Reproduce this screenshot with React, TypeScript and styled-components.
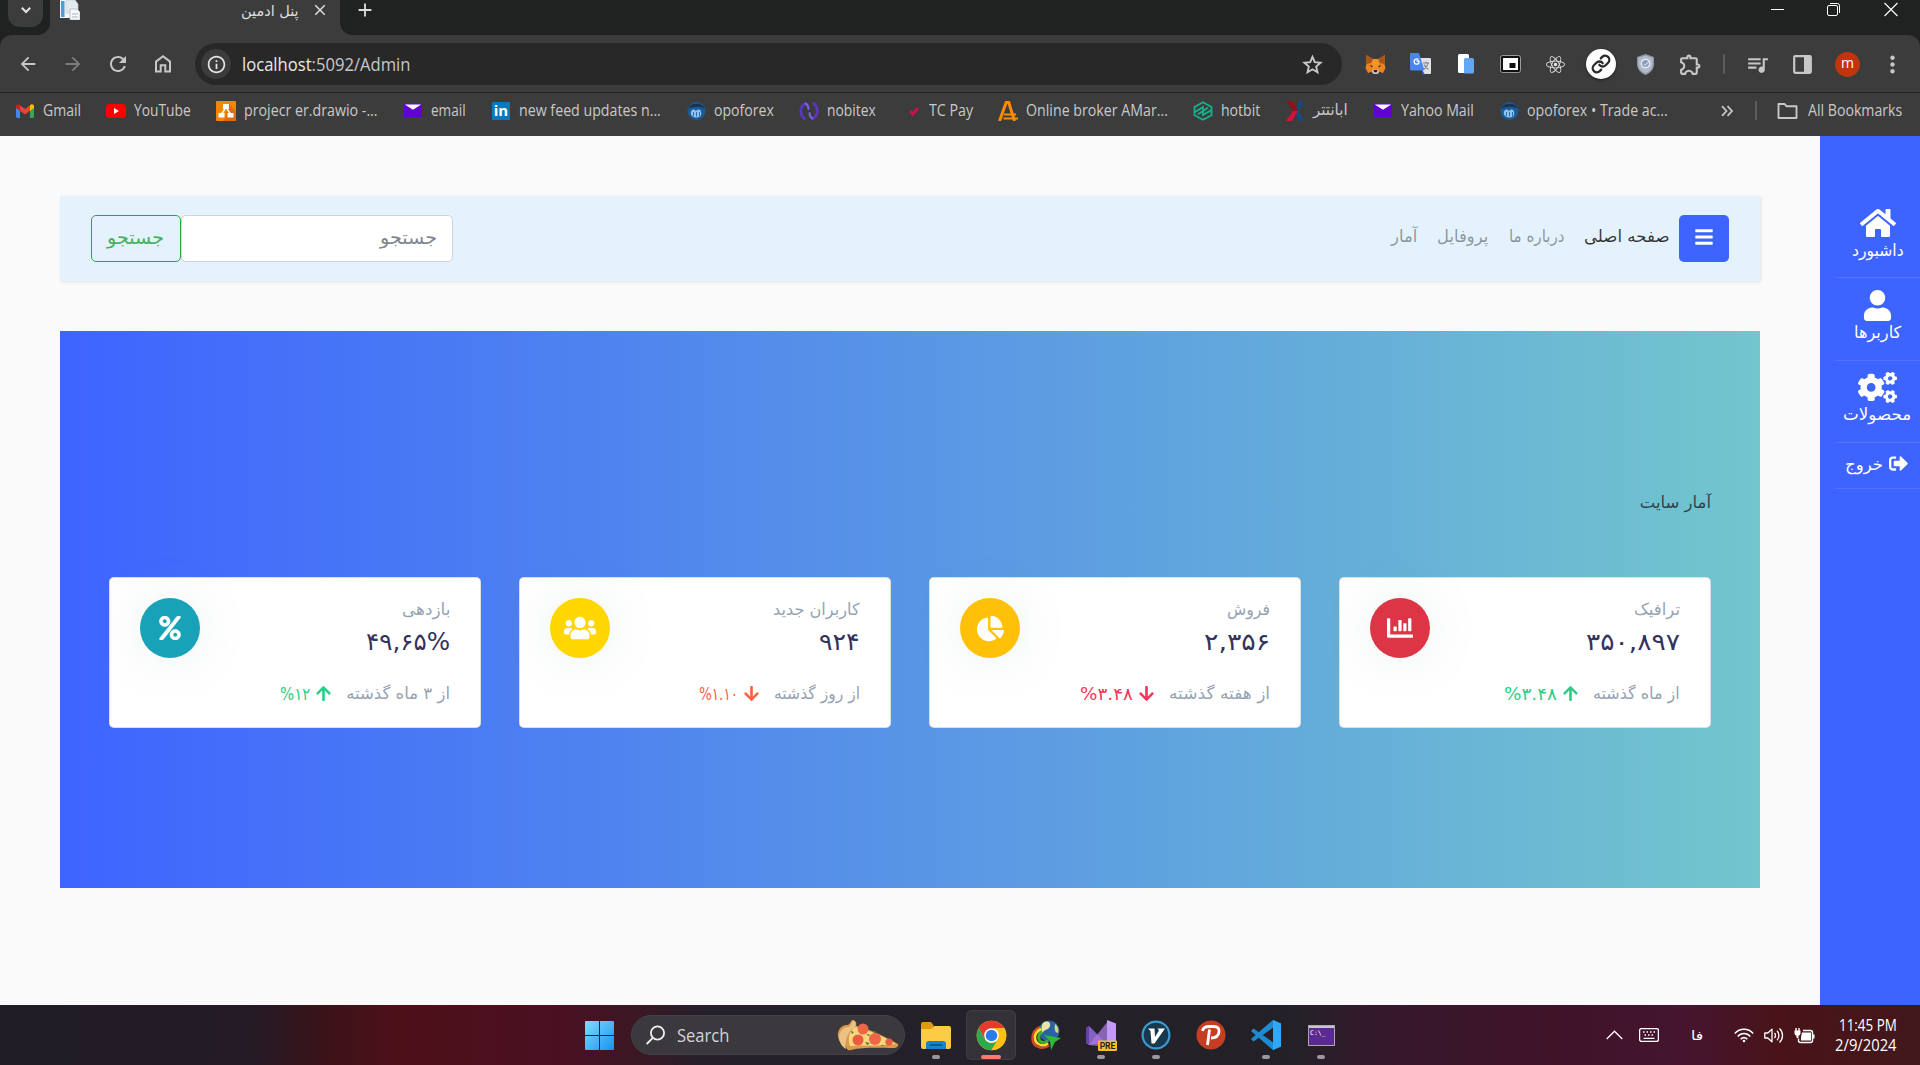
import React, { useLayoutEffect, useRef, useState } from "react";
import styled, { createGlobalStyle } from "styled-components";
import {
  FaArrowDown,
  FaArrowUp,
  FaBars,
  FaChartBar,
  FaChartPie,
  FaCogs,
  FaHome,
  FaPercent,
  FaReact,
  FaSignOutAlt,
  FaUser,
  FaUsers,
} from "react-icons/fa";
import {
  MdAdd,
  MdArrowBack,
  MdArrowForward,
  MdClose,
  MdInfoOutline,
  MdMoreVert,
  MdOutlineExtension,
  MdQueueMusic,
  MdRefresh,
} from "react-icons/md";
import { Link as LinkIcon } from "lucide-react";

const latin = `"Open Sans", "Noto Sans", "DejaVu Sans", sans-serif`;
const persian = `"DejaVu Sans", "Noto Sans", sans-serif`;

const GlobalStyle = createGlobalStyle`
  *, *::before, *::after { box-sizing: border-box; }
  body { margin: 0; background: #fafafa; font-family: ${latin}; overflow: hidden; }
  svg { display: block; flex: none; }
`;

/* ---------- text that keeps a given advance width ---------- */

const FitOuter = styled.span<{ $w: number; $rtl?: boolean }>`
  display: block;
  flex: none;
  width: ${(p) => p.$w}px;
  direction: ${(p) => (p.$rtl ? "rtl" : "ltr")};
  white-space: nowrap;
`;
const FitInner = styled.span<{ $size: number; $rtl?: boolean; $fa?: boolean; $dy?: number }>`
  display: inline-block;
  transform-origin: ${(p) => (p.$rtl ? "right" : "left")} center;
  font-family: ${(p) => (p.$fa ? persian : latin)};
  font-size: ${(p) => p.$size}px;
  line-height: 24px;
  margin-top: ${(p) => p.$dy ?? 0}px;
  vertical-align: top;
`;

interface FitProps {
  w: number;
  size: number;
  rtl?: boolean;
  fa?: boolean;
  dy?: number;
  children: React.ReactNode;
}
function Fit({ w, size, rtl, fa, dy, children }: FitProps) {
  const ref = useRef<HTMLSpanElement>(null);
  const [scale, setScale] = useState(1);
  useLayoutEffect(() => {
    if (ref.current && ref.current.offsetWidth) setScale(w / ref.current.offsetWidth);
  }, [w, size]);
  return (
    <FitOuter $w={w} $rtl={rtl}>
      <FitInner ref={ref} $size={size} $rtl={rtl} $fa={fa} $dy={dy} style={{ transform: `scaleX(${scale})` }}>
        {children}
      </FitInner>
    </FitOuter>
  );
}

/* ---------- browser frame ---------- */

const Screen = styled.div`
  width: 1920px;
  height: 1065px;
  display: flex;
  flex-direction: column;
  overflow: hidden;
`;
const Frame = styled.header`
  background: #202221;
  flex: none;
`;
const TabStrip = styled.div`
  height: 35px;
  display: flex;
  align-items: flex-start;
  padding-left: 8px;
  color: #dcdcdc;
`;
const TabSearch = styled.div`
  width: 35px;
  height: 27px;
  border-radius: 0 0 12px 12px;
  background: #3c3c3c;
  display: flex;
  justify-content: center;
  padding-top: 3px;
`;
const Flare = styled.div<{ $side: "left" | "right" }>`
  width: 12px;
  height: 12px;
  align-self: flex-end;
  margin-left: ${(p) => (p.$side === "left" ? "-5px" : "0")};
  background: radial-gradient(
    circle at ${(p) => (p.$side === "left" ? "0 0" : "100% 0")},
    transparent 11.5px,
    #3c3c3c 12.2px
  );
`;
const Tab = styled.div`
  width: 290px;
  height: 35px;
  background: #3c3c3c;
  display: flex;
  align-items: flex-start;
  padding-left: 10px;
`;
const TabTitle = styled.div`
  margin-left: 161px;
`;
const TabClose = styled.div`
  margin: 1px 0 0 12px;
`;
const NewTab = styled.div`
  margin: -1px 0 0 2px;
`;
const WindowButtons = styled.div`
  margin-left: auto;
  display: flex;
  gap: 42px;
  padding: 2px 21px 0 0;
`;
const Toolbar = styled.div`
  height: 57px;
  background: #3c3c3c;
  border-radius: 12px 12px 0 0;
  display: flex;
  align-items: center;
  color: #c7c7c7;
  padding-left: 5px;
`;
const ToolSlot = styled.div<{ $dim?: boolean }>`
  width: 45px;
  height: 45px;
  flex: none;
  display: flex;
  align-items: center;
  justify-content: center;
  padding-top: 1px;
  color: ${(p) => (p.$dim ? "#7d7d7d" : "#c7c7c7")};
`;
const Address = styled.div`
  width: 1147px;
  height: 42px;
  margin: 1px 0 0 10px;
  border-radius: 21px;
  background: #282828;
  display: flex;
  align-items: center;
  padding: 0 19px 0 6px;
  color: #c7c7c7;
`;
const SiteInfo = styled.div`
  width: 30px;
  height: 30px;
  border-radius: 50%;
  background: #3c3c3c;
  color: #e3e3e3;
  display: flex;
  align-items: center;
  justify-content: center;
  margin-right: 11px;
`;
const Host = styled.span`
  color: #e8e8e8;
`;
const StarHolder = styled.div`
  margin-left: auto;
`;
const Extensions = styled.div`
  display: flex;
  align-items: center;
  margin-left: 11px;
`;
const LinkBadge = styled.div`
  width: 30px;
  height: 30px;
  border-radius: 50%;
  background: #fff;
  color: #2b2b2b;
  display: flex;
  align-items: center;
  justify-content: center;
  box-shadow: 0 1px 3px rgba(0, 0, 0, 0.5);
`;
const ToolDivider = styled.div`
  width: 2px;
  height: 20px;
  background: #5c5c5c;
  margin: 0 10px 0 10px;
`;
const Avatar = styled.div`
  width: 25px;
  height: 25px;
  border-radius: 50%;
  background: #bf360c;
  color: #fff;
  font-size: 14px;
  line-height: 22px;
  text-align: center;
`;
const Bookmarks = styled.nav`
  height: 44px;
  border-top: 1px solid #202221;
  background: #3c3c3c;
  display: flex;
  align-items: center;
  padding: 0 0 8px 15px;
  color: #c9c9c9;
`;
const Bookmark = styled.div`
  display: flex;
  align-items: center;
  gap: 8px;
  margin-right: 25px;
`;
const BookmarkIcon = styled.div`
  width: 20px;
  height: 20px;
  display: flex;
  align-items: center;
  justify-content: center;
`;
const MoreMarks = styled.div`
  margin-left: 28px;
`;
const MarksDivider = styled.div`
  width: 2px;
  height: 19px;
  background: #5c5c5c;
  margin: 0 20px 0 22px;
`;
const FolderLabel = styled.div`
  margin-left: 10px;
`;

/* ---------- small drawings ---------- */

const PageIcon = () => (
  <svg width="20" height="20" viewBox="0 0 20 20">
    <path d="M0 0h13v18H0z" fill="#f4f6f8" />
    <path d="M1 1h3.500v16H1z" fill="#4a9fd0" />
    <path d="M6 0h9l3 4v9H6z" fill="#e3e9ef" stroke="#c6ced6" strokeWidth=".7" />
    <path d="M10 9h7l3 3v8H10z" fill="#f7f7f7" stroke="#a9b2ba" strokeWidth=".7" />
    <path d="M12 14h6M12 17h6" stroke="#a7b6c4" strokeWidth="1" />
  </svg>
);
const ChevronDown = () => (
  <svg width="14" height="14" viewBox="0 0 14 14" fill="none" stroke="#e3e3e3" strokeWidth="2">
    <path d="M2.800 4.800 7 9l4.200-4.200" />
  </svg>
);
const HomeIcon = () => (
  <svg width="18" height="20" viewBox="0 0 18 20" fill="none" stroke="currentColor" strokeWidth="2">
    <path d="M2 17.500V7.600L9 2.200l7 5.400v9.900h-4.700v-6.200H6.700v6.200z" />
  </svg>
);
const Star = () => (
  <svg width="21" height="21" viewBox="0 0 21 21" fill="none" stroke="currentColor" strokeWidth="1.900">
    <path d="m10.500 2.800 2.300 5.400 5.800.5-4.400 3.900 1.300 5.700-5-3-5 3 1.300-5.700-4.400-3.900 5.800-.5z" />
  </svg>
);
const Fox = () => (
  <svg width="21" height="21" viewBox="0 0 21 21">
    <path d="M1 1l7 4h5l7-4-.5 9 1 4-2.500 5-4.500-1.500h-6L3 19 .5 14l1-4z" fill="#ee8420" />
    <path d="M1 1l7 4-2 4-4.500 1zM20 1l-7 4 2 4 4.500 1z" fill="#a4561f" />
    <path d="M8 5h5l1.500 9h-8z" fill="#f79429" />
    <path d="M7.500 15.500h6l.5 3-1.500 1.500h-4L7 18.500z" fill="#d6c0b3" />
    <path d="M8.500 16h4l-.8 2.200H9.300z" fill="#222" />
    <path d="M4.500 11l3.500 1-1 1.500zM16.500 11l-3.500 1 1 1.500z" fill="#233447" />
  </svg>
);
const Translate = () => (
  <svg width="22" height="22" viewBox="0 0 22 22">
    <path d="M9 5h11a1 1 0 0 1 1 1v14a1 1 0 0 1-1 1h-7z" fill="#dfe3e6" />
    <path d="M12 17l3 4.500h-3z" fill="#2a56c6" />
    <path d="M1 0h8l5.500 17.500H1a1 1 0 0 1-1-1V1a1 1 0 0 1 1-1z" fill="#4a86ee" />
    <path d="M9.300 8H6.500M8.400 6.600a2.600 2.600 0 1 0 .9 2" fill="none" stroke="#fff" strokeWidth="1.300" />
    <path d="M13 10h6M16 8.500V10M18 10c-.5 3-2.500 5-4 6M14 11.500c1 2.500 3 4 4.500 4.800" fill="none" stroke="#77828c" strokeWidth="1.100" />
  </svg>
);
const Devices = () => (
  <svg width="18" height="20" viewBox="0 0 18 20">
    <rect x="1" y="0" width="11" height="19" rx="1.500" fill="#fff" />
    <rect x="7" y="4" width="10" height="15.500" rx="1.500" fill="#62a7f7" />
  </svg>
);
const Pip = () => (
  <svg width="21" height="18" viewBox="0 0 21 18">
    <rect x=".5" y=".5" width="20" height="17" rx="2" fill="#111" stroke="#999" />
    <path d="M3 3h15v12H3z" fill="#fff" />
    <path d="M9.500 8h6v5h-6z" fill="#111" />
  </svg>
);
const Shield = () => (
  <svg width="17" height="21" viewBox="0 0 17 21">
    <path d="M8.500 0 17 3v7c0 5-3.500 9-8.500 11C3.500 19 0 15 0 10V3z" fill="#8d97a8" />
    <path d="M8.500 1.500 15.600 4v6c0 4.200-3 7.500-7.100 9.400C4.400 17.500 1.400 14.200 1.400 10V4z" fill="#b4bccb" />
    <circle cx="8.500" cy="9.500" r="4.200" fill="#8f9fc0" stroke="#e8ecf5" strokeWidth="1.300" />
    <path d="M7 11c2.500 0 3-1.500 5-4" stroke="#e8ecf5" fill="none" />
  </svg>
);
const SidePanel = () => (
  <svg width="19" height="19" viewBox="0 0 19 19">
    <rect x="1.200" y="1.200" width="16.600" height="16.600" rx="1" fill="none" stroke="#c7c7c7" strokeWidth="2.200" />
    <path d="M11 1h7v17h-7z" fill="#c7c7c7" />
  </svg>
);
const Gmail = () => (
  <svg width="18" height="14" viewBox="0 0 18 14">
    <path d="M0 2v10.600c0 .8.600 1.400 1.300 1.400H4V5z" fill="#4285f4" />
    <path d="M18 2v10.600c0 .8-.6 1.400-1.300 1.400H14V5z" fill="#34a853" />
    <path d="M4 1.300v5.500l5 3.700 5-3.700V1.300L9 5z" fill="#ea4335" />
    <path d="M0 2v2l4 2.900V1.300l-.8-.6C1.900-.3 0 .6 0 2z" fill="#c5221f" />
    <path d="M18 2v2l-4 2.900V1.300l.8-.6C16.100-.3 18 .6 18 2z" fill="#fbbc04" />
  </svg>
);
const YouTube = () => (
  <svg width="20" height="14" viewBox="0 0 20 14">
    <rect width="20" height="14" rx="3.500" fill="#f00" />
    <path d="M8 4v6l5-3z" fill="#fff" />
  </svg>
);
const DrawIo = () => (
  <svg width="20" height="20" viewBox="0 0 20 20">
    <rect width="20" height="20" rx="1" fill="#f08705" />
    <path d="M13 3l7 8v9H8z" fill="#df6c0c" />
    <path d="M9 8 5.500 13M11 8l3.500 5" stroke="#fff" strokeWidth="1.500" />
    <path d="M7 3h6v5H7zM2.500 12h6v4.500h-6zM11.500 12h6v4.500h-6z" fill="#fff" />
  </svg>
);
const Mail = () => (
  <svg width="18" height="13" viewBox="0 0 18 13">
    <path d="M0 0h18v13H0z" fill="#6001d2" />
    <path d="M.8.500h16.400L9 5.800z" fill="#fff" />
  </svg>
);
const LinkedInBox = styled.div`
  width: 18px;
  height: 18px;
  background: #0a78b9;
  color: #fff;
  font-weight: 700;
  font-size: 15px;
  line-height: 16px;
  text-align: center;
`;
const Opo = () => (
  <svg width="19" height="20" viewBox="0 0 19 20">
    <circle cx="9.500" cy="10" r="9" fill="#1d5b96" />
    <path d="M1 8a9 8 0 0 1 17 0c-4-3-12-3-17 0z" fill="#173450" />
    <path d="M4 11a2.600 2.600 0 0 1 5-.8 2.600 2.600 0 0 1 5 .8c1 3-1 5.500-4.500 5.500S3 14 4 11z" fill="#8fc4f0" />
    <path d="M6.500 11v4M9.500 11v4.500M12.500 11v4" stroke="#2b6fae" />
  </svg>
);
const Nobitex = () => (
  <svg width="20" height="20" viewBox="0 0 20 20" fill="none" strokeWidth="2.800" strokeLinecap="round">
    <path d="M6.500 2.500C.5 5 .5 14 5.500 17.500" stroke="#5a35c0" />
    <path d="M6.500 2.500c2 1 3 3 3 5.500" stroke="#7c5fe6" strokeWidth="2" />
    <path d="M13.500 17.500c6-2.500 6-11.500 1-15" stroke="#5a35c0" />
    <path d="M13.500 17.500c-2-1-3-3-3-5.500" stroke="#7c5fe6" strokeWidth="2" />
  </svg>
);
const TcPay = () => (
  <svg width="18" height="18" viewBox="0 0 18 18" fill="none">
    <path d="M12 3a7 7 0 1 0 1 12" stroke="#37403a" strokeWidth="1.600" />
    <path d="m8 9 2.800 3L16 6" stroke="#c8104c" strokeWidth="3" />
  </svg>
);
const AMarkets = () => (
  <svg width="20" height="20" viewBox="0 0 20 20" fill="none" stroke="#fb8c00">
    <path d="M1.500 20 8.200 1.500h2.600L16.500 20" strokeWidth="3" />
    <path d="M6 13.500h12M5.500 17.500H20" strokeWidth="1.800" />
  </svg>
);
const Hotbit = () => (
  <svg width="20" height="20" viewBox="0 0 20 20" fill="none" stroke="#19b28e" strokeWidth="1.800">
    <path d="M10 1.200 18.500 6v8.200L10 18.800 1.500 14.200V6z" />
    <path d="M2 11 10 6v4l-5 3.200M18 9.200 10 14v-4l5-3.200" />
  </svg>
);
const Aban = () => (
  <svg width="19" height="20" viewBox="0 0 19 20">
    <path d="M18 0 13 10l5 10h-5.500L9.500 12 13 0z" fill="#174a7c" />
    <path d="M1 0h6l5 10H7z" fill="#8e1313" />
    <path d="M7 10h5L6 20H0z" fill="#d3123b" />
  </svg>
);
const Guillemet = () => (
  <svg width="12" height="12" viewBox="0 0 12 12" fill="none" stroke="#c7c7c7" strokeWidth="1.800">
    <path d="m1 1.200 4.500 4.800L1 10.800M6.500 1.200 11 6l-4.500 4.800" />
  </svg>
);
const Folder = () => (
  <svg width="21" height="16" viewBox="0 0 21 16" fill="none" stroke="#c7c7c7" strokeWidth="1.900">
    <path d="M1.500 1h6l2.200 2.300h9.800V15h-18z" strokeLinejoin="round" />
  </svg>
);

const bookmarks = [
  { icon: <Gmail />, label: "Gmail", w: 38 },
  { icon: <YouTube />, label: "YouTube", w: 57 },
  { icon: <DrawIo />, label: "projecr er.drawio -...", w: 134 },
  { icon: <Mail />, label: "email", w: 35 },
  { icon: <LinkedInBox>in</LinkedInBox>, label: "new feed updates n...", w: 142 },
  { icon: <Opo />, label: "opoforex", w: 60 },
  { icon: <Nobitex />, label: "nobitex", w: 49 },
  { icon: <TcPay />, label: "TC Pay", w: 44 },
  { icon: <AMarkets />, label: "Online broker AMar...", w: 142 },
  { icon: <Hotbit />, label: "hotbit", w: 39 },
  { icon: <Aban />, label: "ابانتتر", w: 35, rtl: true },
  { icon: <Mail />, label: "Yahoo Mail", w: 73 },
  { icon: <Opo />, label: "opoforex • Trade ac...", w: 141 },
];

function Browser() {
  return (
    <Frame>
      <TabStrip>
        <TabSearch>
          <ChevronDown />
        </TabSearch>
        <Flare $side="left" />
        <Tab>
          <PageIcon />
          <TabTitle>
            <Fit w={58} size={15} rtl fa dy={-1}>
              پنل ادمین
            </Fit>
          </TabTitle>
          <TabClose>
            <MdClose size={18} />
          </TabClose>
        </Tab>
        <Flare $side="right" />
        <NewTab>
          <MdAdd size={22} />
        </NewTab>
        <WindowButtons>
          <svg width="15" height="15" viewBox="0 0 15 15" stroke="#fff">
            <path d="M1 7.500h13" />
          </svg>
          <svg width="15" height="15" viewBox="0 0 15 15" fill="none" stroke="#fff">
            <rect x=".5" y="3.500" width="10" height="10" rx="1.500" />
            <path d="M3 1.500h7.500a2 2 0 0 1 2 2V11" />
          </svg>
          <svg width="15" height="15" viewBox="0 0 15 15" stroke="#fff" strokeWidth="1.100">
            <path d="m.5 1 13 13M13.500 1 .5 14" />
          </svg>
        </WindowButtons>
      </TabStrip>
      <Toolbar>
        <ToolSlot>
          <MdArrowBack size={22} />
        </ToolSlot>
        <ToolSlot $dim>
          <MdArrowForward size={22} />
        </ToolSlot>
        <ToolSlot>
          <MdRefresh size={24} />
        </ToolSlot>
        <ToolSlot>
          <HomeIcon />
        </ToolSlot>
        <Address>
          <SiteInfo>
            <MdInfoOutline size={21} />
          </SiteInfo>
          <Fit w={168} size={17.5}>
            <Host>localhost</Host>:5092/Admin
          </Fit>
          <StarHolder>
            <Star />
          </StarHolder>
        </Address>
        <Extensions>
          <ToolSlot>
            <Fox />
          </ToolSlot>
          <ToolSlot>
            <Translate />
          </ToolSlot>
          <ToolSlot>
            <Devices />
          </ToolSlot>
          <ToolSlot>
            <Pip />
          </ToolSlot>
          <ToolSlot>
            <FaReact size={19} color="#e8e8e8" />
          </ToolSlot>
          <ToolSlot>
            <LinkBadge>
              <LinkIcon size={20} strokeWidth={2.8} />
            </LinkBadge>
          </ToolSlot>
          <ToolSlot>
            <Shield />
          </ToolSlot>
          <ToolSlot>
            <MdOutlineExtension size={25} />
          </ToolSlot>
          <ToolDivider />
          <ToolSlot>
            <MdQueueMusic size={25} />
          </ToolSlot>
          <ToolSlot>
            <SidePanel />
          </ToolSlot>
          <ToolSlot>
            <Avatar>m</Avatar>
          </ToolSlot>
          <ToolSlot>
            <MdMoreVert size={27} />
          </ToolSlot>
        </Extensions>
      </Toolbar>
      <Bookmarks>
        {bookmarks.map((b) => (
          <Bookmark key={b.label}>
            <BookmarkIcon>{b.icon}</BookmarkIcon>
            <Fit w={b.w} size={15.5} rtl={b.rtl} fa={b.rtl} dy={-2}>
              {b.label}
            </Fit>
          </Bookmark>
        ))}
        <MoreMarks>
          <Guillemet />
        </MoreMarks>
        <MarksDivider />
        <Folder />
        <FolderLabel>
          <Fit w={94} size={15.5} dy={-2}>
            All Bookmarks
          </Fit>
        </FolderLabel>
      </Bookmarks>
    </Frame>
  );
}

/* ---------- admin page ---------- */

const Page = styled.div`
  flex: 1;
  min-height: 0;
  display: flex;
  background: #fafafa;
`;
const Content = styled.main`
  width: 1820px;
  padding: 60px 60px 0;
`;
const Navbar = styled.nav`
  height: 85px;
  background: #e3f2fd;
  box-shadow: 1px 1px 3px rgba(0, 0, 0, 0.1);
  display: flex;
  align-items: center;
  padding: 0 31px;
`;
const SearchButton = styled.button`
  width: 90px;
  height: 47px;
  padding: 0 0 0 2px;
  border: 1px solid #28a745;
  border-radius: 5px;
  background: transparent;
  color: #46b160;
  display: flex;
  align-items: center;
  justify-content: center;
`;
const SearchField = styled.div`
  width: 272px;
  height: 47px;
  border: 1px solid #ced4da;
  border-radius: 5px;
  background: #fff;
  color: #7f878e;
  display: flex;
  align-items: center;
  justify-content: flex-end;
  padding-right: 15px;
`;
const NavLinks = styled.div`
  margin-left: auto;
  display: flex;
  align-items: center;
  gap: 20px;
  padding-right: 10px;
`;
const NavLink = styled.div<{ $active?: boolean }>`
  color: ${(p) => (p.$active ? "rgba(0,0,0,.78)" : "rgba(0,0,0,.4)")};
`;
const MenuButton = styled.button`
  width: 50px;
  height: 47px;
  padding: 0 0 4px;
  border: 0;
  border-radius: 5px;
  background: #3e64ff;
  color: #fff;
  display: flex;
  align-items: center;
  justify-content: center;
`;
const Hero = styled.section`
  height: 557px;
  margin-top: 50px;
  padding: 160px 49px 0;
  background: linear-gradient(to right, #3e64ff, #72c6cd);
`;
const HeroTitle = styled.div`
  display: flex;
  justify-content: flex-end;
  height: 24px;
  color: rgba(33, 37, 41, 0.82);
`;
const Cards = styled.div`
  display: flex;
  gap: 38px;
  margin-top: 62px;
`;
const Card = styled.article`
  width: 372px;
  height: 151px;
  border: 1px solid rgba(0, 0, 0, 0.125);
  background: #fff;
  border-radius: 5px;
  padding: 20px 30px 0;
`;
const CardTop = styled.div`
  display: flex;
  justify-content: space-between;
`;
const Disc = styled.div<{ $color: string }>`
  width: 60px;
  height: 60px;
  border-radius: 50%;
  background: ${(p) => p.$color};
  color: #fff;
  display: flex;
  align-items: center;
  justify-content: center;
  box-shadow: 0 0 50px rgba(120, 145, 145, 0.15);
`;
const Figures = styled.div`
  display: flex;
  flex-direction: column;
  align-items: flex-end;
`;
const CardName = styled.div`
  color: #95a3b3;
  height: 32px;
`;
const CardValue = styled.div`
  color: #32325d;
  height: 32px;
`;
const CardFoot = styled.div`
  display: flex;
  justify-content: flex-end;
  align-items: center;
  margin-top: 20px;
  color: #95a3b3;
`;
const Change = styled.div<{ $color: string }>`
  display: flex;
  align-items: center;
  gap: 5px;
  margin-right: 14px;
  color: ${(p) => p.$color};
  svg {
    margin-top: -2px;
  }
`;
const Sidebar = styled.aside`
  width: 100px;
  background: #3e64ff;
  padding: 59px 0 0 15px;
  color: #fff;
`;
const SideItem = styled.div<{ $h: number; $row?: boolean; $inset?: number }>`
  height: ${(p) => p.$h}px;
  padding-top: ${(p) => p.$inset ?? 12}px;
  padding-right: ${(p) => (p.$row ? 12 : 0)}px;
  border-bottom: 1px solid rgba(255, 255, 255, 0.1);
  display: flex;
  flex-direction: ${(p) => (p.$row ? "row" : "column")};
  align-items: ${(p) => (p.$row ? "flex-start" : "center")};
  justify-content: ${(p) => (p.$row ? "flex-end" : "flex-start")};
  gap: ${(p) => (p.$row ? 6 : 0)}px;
`;
const SideIcon = styled.div`
  height: 32px;
  display: flex;
  align-items: center;
`;
const ExitIcon = styled.div`
  padding-top: 1px;
`;

const cards = [
  { name: "بازدهی", nw: 48, value: "۴۹,۶۵%", vw: 84, note: "از ۳ ماه گذشته", ow: 104, up: true, change: "%۱۲", cw: 30, tone: "#2dce89", disc: "#17a2b8", icon: <FaPercent size={24} stroke="#fff" strokeWidth={14} /> },
  { name: "کاربران جدید", nw: 87, value: "۹۲۴", vw: 41, note: "از روز گذشته", ow: 86, up: false, change: "%۱.۱۰", cw: 39, tone: "#fb6340", disc: "#ffd600", icon: <FaUsers size={32} /> },
  { name: "فروش", nw: 43, value: "۲,۳۵۶", vw: 66, note: "از هفته گذشته", ow: 101, up: false, change: "%۳.۴۸", cw: 53, tone: "#f5365c", disc: "#ffc107", icon: <FaChartPie size={27} /> },
  { name: "ترافیک", nw: 46, value: "۳۵۰,۸۹۷", vw: 94, note: "از ماه گذشته", ow: 87, up: true, change: "%۳.۴۸", cw: 53, tone: "#2dce89", disc: "#dc3545", icon: <FaChartBar size={26} /> },
];

function AdminPage() {
  return (
    <Page>
      <Content>
        <Navbar>
          <SearchButton>
            <Fit w={57} size={18.5} rtl fa dy={-2}>
              جستجو
            </Fit>
          </SearchButton>
          <SearchField>
            <Fit w={57} size={18.5} rtl fa dy={-2}>
              جستجو
            </Fit>
          </SearchField>
          <NavLinks>
            <NavLink>
              <Fit w={26} size={17} rtl fa dy={-4}>
                آمار
              </Fit>
            </NavLink>
            <NavLink>
              <Fit w={51} size={17} rtl fa dy={-4}>
                پروفایل
              </Fit>
            </NavLink>
            <NavLink>
              <Fit w={56} size={17} rtl fa dy={-4}>
                درباره ما
              </Fit>
            </NavLink>
            <NavLink $active>
              <Fit w={85} size={17} rtl fa dy={-4}>
                صفحه اصلی
              </Fit>
            </NavLink>
          </NavLinks>
          <MenuButton>
            <FaBars size={20} />
          </MenuButton>
        </Navbar>
        <Hero>
          <HeroTitle>
            <Fit w={71} size={16.5} rtl fa>
              آمار سایت
            </Fit>
          </HeroTitle>
          <Cards>
            {cards.map((c) => (
              <Card key={c.name}>
                <CardTop>
                  <Disc $color={c.disc}>{c.icon}</Disc>
                  <Figures>
                    <CardName>
                      <Fit w={c.nw} size={16.5} rtl fa>
                        {c.name}
                      </Fit>
                    </CardName>
                    <CardValue>
                      <Fit w={c.vw} size={24} fa>
                        {c.value}
                      </Fit>
                    </CardValue>
                  </Figures>
                </CardTop>
                <CardFoot>
                  <Change $color={c.tone}>
                    <Fit w={c.cw} size={17} fa dy={-1}>
                      {c.change}
                    </Fit>
                    {c.up ? <FaArrowUp size={17} /> : <FaArrowDown size={17} />}
                  </Change>
                  <Fit w={c.ow} size={16.5} rtl fa>
                    {c.note}
                  </Fit>
                </CardFoot>
              </Card>
            ))}
          </Cards>
        </Hero>
      </Content>
      <Sidebar>
        <SideItem $h={83}>
          <SideIcon>
            <FaHome size={36} />
          </SideIcon>
          <Fit w={52} size={16.5} rtl fa>
            داشبورد
          </Fit>
        </SideItem>
        <SideItem $h={83} $inset={11}>
          <SideIcon>
            <FaUser size={31} />
          </SideIcon>
          <Fit w={47} size={16.5} rtl fa>
            کاربرها
          </Fit>
        </SideItem>
        <SideItem $h={82} $inset={10}>
          <SideIcon>
            <FaCogs size={39} />
          </SideIcon>
          <Fit w={68} size={16.5} rtl fa>
            محصولات
          </Fit>
        </SideItem>
        <SideItem $h={46} $row $inset={10}>
          <Fit w={38} size={16.5} rtl fa>
            خروج
          </Fit>
          <ExitIcon>
            <FaSignOutAlt size={19} />
          </ExitIcon>
        </SideItem>
      </Sidebar>
    </Page>
  );
}

/* ---------- taskbar ---------- */

const Taskbar = styled.footer`
  height: 60px;
  flex: none;
  display: flex;
  align-items: center;
  padding-left: 585px;
  color: #fff;
  background: linear-gradient(
    to right,
    #201d26 0,
    #241b25 250px,
    #3d1219 330px,
    #4d1019 400px,
    #4a1022 560px,
    #3a1824 640px,
    #25202a 700px,
    #232127 1290px,
    #35182c 1380px,
    #401228 1560px,
    #451530 1680px,
    #491318 1780px,
    #42181c 1920px
  );
`;
const SearchPill = styled.div`
  width: 274px;
  height: 40px;
  margin-left: 17px;
  border-radius: 20px;
  background: #3b383e;
  border: 1px solid #444147;
  display: flex;
  align-items: center;
  padding: 0 5px 0 14px;
  color: #d6d4d6;
`;
const SearchWord = styled.div`
  margin: 0 auto 0 11px;
`;
const Apps = styled.div`
  display: flex;
  gap: 5px;
  margin-left: 6px;
`;
const AppTile = styled.div<{ $active?: boolean }>`
  width: 50px;
  height: 50px;
  border-radius: 6px;
  padding-top: 10px;
  display: flex;
  flex-direction: column;
  align-items: center;
  justify-content: space-between;
  background: ${(p) => (p.$active ? "#343238" : "transparent")};
  box-shadow: ${(p) => (p.$active ? "inset 0 0 0 1px #403e44" : "none")};
`;
const AppPicture = styled.div`
  height: 30px;
  display: flex;
  align-items: center;
`;
const Running = styled.div<{ $state: "none" | "open" | "active" }>`
  height: 4px;
  margin-bottom: 1px;
  border-radius: 2px;
  width: ${(p) => (p.$state === "active" ? 20 : 8)}px;
  background: ${(p) => (p.$state === "active" ? "#fb7d66" : p.$state === "open" ? "#9a989c" : "transparent")};
`;
const Tray = styled.div`
  margin-left: auto;
  display: flex;
  align-items: center;
  padding-right: 23px;
`;
const TrayItem = styled.div<{ $before?: number }>`
  margin-left: ${(p) => p.$before ?? 0}px;
`;
const Clock = styled.div`
  margin-left: 20px;
  display: flex;
  flex-direction: column;
  align-items: flex-end;
  padding-bottom: 4px;
`;
const ClockLine = styled.div`
  height: 20px;
`;

const Windows = () => (
  <svg width="29" height="29" viewBox="0 0 29 29">
    <defs>
      <linearGradient id="win" x1="0" y1="0" x2="1" y2="1">
        <stop offset="0" stopColor="#7fdcff" />
        <stop offset="1" stopColor="#1593f2" />
      </linearGradient>
    </defs>
    <path d="M1 0h13v14H0V1a1 1 0 0 1 1-1zM15 0h13a1 1 0 0 1 1 1v13H15zM0 15h14v14H1a1 1 0 0 1-1-1zM15 15h14v13a1 1 0 0 1-1 1H15z" fill="url(#win)" />
  </svg>
);
const Magnifier = () => (
  <svg width="20" height="20" viewBox="0 0 20 20" fill="none" stroke="#f0f0f0" strokeWidth="1.800">
    <circle cx="11.500" cy="8" r="6.600" />
    <path d="m6.800 12.800-5.600 5.700" strokeLinecap="round" />
  </svg>
);
const Pizza = () => (
  <svg width="62" height="31" viewBox="0 0 62 31">
    <path d="M15 0c4 0 5 3 4 6 8 1 31 11 42 18 1 2-1 4-4 4-17 0-30-1-43 2-3 1-5-1-5-4C-2 22-2 6 10 5c2 0 3-2 5-5z" fill="#d99a4e" />
    <path d="M16 1c3 0 3 3 2 6-6 3-11 13-9 22-9-5-10-20 2-22 3 0 3-4 5-6z" fill="#edc184" />
    <path d="M18 7c14 3 29 10 41 17-15 2-32 1-46 2-3-8 0-15 5-19z" fill="#fbd57c" />
    <circle cx="26" cy="9" r="5.500" fill="#ee6647" />
    <circle cx="21" cy="20" r="5.500" fill="#e95c3f" />
    <circle cx="38" cy="19" r="6" fill="#ee6647" />
    <circle cx="52" cy="22" r="3.600" fill="#e95c3f" />
    <path d="M14 11l3 1-2 2zM29 15l3-1 1 2zM28 22l5 1-3 2zM36 11l4 1-3 1zM44 25l4 0-3 1z" fill="#4a7a35" />
  </svg>
);
const Explorer = () => (
  <svg width="30" height="27" viewBox="0 0 30 27">
    <path d="M0 2a2 2 0 0 1 2-2h8l3 4h-1v6H0z" fill="#e09a10" />
    <path d="M0 7h10l3-3h15a2 2 0 0 1 2 2v19a2 2 0 0 1-2 2H2a2 2 0 0 1-2-2z" fill="#fdcb45" />
    <path d="M5 27v-5a3 3 0 0 1 3-3h14a3 3 0 0 1 3 3v5z" fill="#1a7fd1" />
    <path d="M9 23h12" stroke="#0b4d8a" strokeWidth="1.600" />
  </svg>
);
const Chrome = () => (
  <svg width="31" height="31" viewBox="0 0 48 48">
    <circle cx="24" cy="24" r="23" fill="#fbc117" />
    <path d="M4.100 12.500 14 29.800 24 24l4-11.500h15.900a23 23 0 0 0-39.800 0z" fill="#e33b2e" />
    <path d="M14 29.800A11.500 11.500 0 0 0 34 29.800L24 47A23 23 0 0 1 4.100 12.500z" fill="#2da94f" />
    <path d="M24 12.500h19.900A23 23 0 0 1 24 47l10-17.200a11.500 11.500 0 0 0-10-17.300z" fill="#fbc117" />
    <circle cx="24" cy="24" r="11.300" fill="#fff" />
    <circle cx="24" cy="24" r="9" fill="#2a7bee" />
  </svg>
);
const Idm = () => (
  <svg width="30" height="30" viewBox="0 0 30 30">
    <circle cx="18" cy="11" r="10.500" fill="#2a62a8" />
    <path d="M12 3c4-3 8-1 7 3s-5 3-8 7c-1-4-1-7 1-10z" fill="#e9e6a0" />
    <path d="M24 4c3 2 4 6 3 9-3 0-4-4-3-9z" fill="#d9d37a" />
    <path d="M9 7C-1 12-1 25 9 27.500c3 .7 6 0 9-2" fill="none" stroke="#d9452a" strokeWidth="2.600" />
    <path d="M10 9C2 13 2 23 10 25c3 .7 5 0 7-2" fill="none" stroke="#f4e02c" strokeWidth="2.600" />
    <path d="M11 12c-5 3-4 10 1 10.500 3 0 4-1 5-2" fill="none" stroke="#3fae2f" strokeWidth="3" />
    <path d="M13 15l17 3-6 4-4 8-1-9z" fill="#2fb83a" />
  </svg>
);
const VisualStudio = () => (
  <svg width="31" height="31" viewBox="0 0 31 31">
    <path d="M0 8l3-2 19 19-2 2-5-4L3 25l-3-2z" fill="#8661c5" />
    <path d="M0 8l3-2v18l-3-1z" fill="#6b3fa8" />
    <path d="M3 25 22 1v26z" fill="#a77be0" opacity=".75" />
    <path d="M21 0l9 3.500V26l-9 4z" fill="#c49af5" />
    <rect x="12" y="20.500" width="19" height="10.500" rx="1" fill="#fdbb2e" />
    <text x="21.500" y="29" fontSize="8.500" fontWeight="700" fontFamily="Roboto, sans-serif" textAnchor="middle" fill="#222">
      PRE
    </text>
  </svg>
);
const Vivaldi = () => (
  <svg width="30" height="30" viewBox="0 0 30 30">
    <circle cx="15" cy="15" r="14.500" fill="#3a9bd0" />
    <circle cx="15" cy="15" r="12.300" fill="#17384f" />
    <path d="M7 8.500h6.500L14 17l4-6.500-1.500-2H24L13.500 23.500h-3L9.500 11z" fill="#fff" />
  </svg>
);
const Psiphon = () => (
  <svg width="30" height="30" viewBox="0 0 30 30">
    <circle cx="15" cy="15" r="14.500" fill="#c43e22" />
    <path d="M6.500 11c.5-3.500 3-4.500 7-4.500h4c4.500 0 6 2 5.500 5.500s-3 6-8 6M13.500 9.500 11.500 25" fill="none" stroke="#fff" strokeWidth="2.800" />
  </svg>
);
const VsCode = () => (
  <svg width="31" height="30" viewBox="0 0 31 30">
    <path d="M22 0l8 3.500v23L22 30 0 11l2.500-2.500L23 23V7L2.500 21.500 0 19z" fill="#1f8ad2" />
    <path d="M22 0l8 3.500v23L22 30z" fill="#2fa8f5" />
  </svg>
);
const Terminal = () => (
  <svg width="27" height="21" viewBox="0 0 27 21">
    <rect x=".5" y=".5" width="26" height="20" fill="#5b2a90" stroke="#a9a6ad" />
    <path d="M1 1h25v2H1z" fill="#c9c5cf" />
    <text x="2" y="10" fontSize="6.500" fontFamily="DejaVu Sans Mono, monospace" fill="#fff">
      C:\_
    </text>
  </svg>
);

const apps: { id: string; picture: React.ReactNode; state: "none" | "open" | "active" }[] = [
  { id: "explorer", picture: <Explorer />, state: "open" },
  { id: "chrome", picture: <Chrome />, state: "active" },
  { id: "idm", picture: <Idm />, state: "none" },
  { id: "vs", picture: <VisualStudio />, state: "open" },
  { id: "vivaldi", picture: <Vivaldi />, state: "open" },
  { id: "psiphon", picture: <Psiphon />, state: "none" },
  { id: "code", picture: <VsCode />, state: "open" },
  { id: "terminal", picture: <Terminal />, state: "open" },
];

function TaskbarRow() {
  return (
    <Taskbar>
      <Windows />
      <SearchPill>
        <Magnifier />
        <SearchWord>
          <Fit w={52} size={17.5}>
            Search
          </Fit>
        </SearchWord>
        <Pizza />
      </SearchPill>
      <Apps>
        {apps.map((a) => (
          <AppTile key={a.id} $active={a.state === "active"}>
            <AppPicture>{a.picture}</AppPicture>
            <Running $state={a.state} />
          </AppTile>
        ))}
      </Apps>
      <Tray>
        <TrayItem>
          <svg width="17" height="10" viewBox="0 0 17 10" fill="none" stroke="#fff" strokeWidth="1.300">
            <path d="M.7 9 8.500 1.200 16.300 9" />
          </svg>
        </TrayItem>
        <TrayItem $before={16}>
          <svg width="20" height="14" viewBox="0 0 20 14" fill="none" stroke="#fff" strokeWidth="1.300">
            <rect x=".6" y=".6" width="18.800" height="12.800" rx="1.800" />
            <path d="M4 4h1.500M7.500 4H9M11 4h1.500M14.500 4H16M5.500 7H7M9 7h1.500M12.500 7H14M4.500 10.300h11" />
          </svg>
        </TrayItem>
        <TrayItem $before={32}>
          <Fit w={12} size={13} rtl fa dy={1}>
            فا
          </Fit>
        </TrayItem>
        <TrayItem $before={31}>
          <svg width="20" height="15" viewBox="0 0 20 15" fill="none" stroke="#fff" strokeWidth="1.500">
            <path d="M.8 5.500c5-5.600 13.400-5.600 18.400 0M3.700 8.500c3.500-3.900 9.100-3.900 12.600 0M6.600 11.300c2-2 4.800-2 6.800 0" />
            <circle cx="10" cy="13" r="1.300" fill="#fff" stroke="none" />
          </svg>
        </TrayItem>
        <TrayItem $before={10}>
          <svg width="20" height="17" viewBox="0 0 20 17" fill="none" stroke="#fff" strokeWidth="1.300">
            <path d="M.8 6v5h3l4.200 3.800V2.200L3.800 6z" strokeLinejoin="round" />
            <path d="M10.500 6c1.200 1.500 1.200 3.500 0 5M13 3.800c2.500 2.600 2.500 6.800 0 9.400M15.500 1.500c4 3.800 4 10.200 0 14" />
          </svg>
        </TrayItem>
        <TrayItem $before={10}>
          <svg width="21" height="17" viewBox="0 0 21 17" fill="none" stroke="#fff" strokeWidth="1.400">
            <path d="M9 3.500h7.500a2 2 0 0 1 2 2v8a2 2 0 0 1-2 2H6.500a2 2 0 0 1-2-2v-2" />
            <path d="M8 5.500h9v8H7V10z" fill="#fff" stroke="none" />
            <path d="M19 7.500h1.500v4H19z" fill="#fff" stroke="none" />
            <path d="M.5 3.500h6v3a2.500 2.500 0 0 1-2 2.200V11h-2V8.700A2.500 2.500 0 0 1 .5 6.500z" fill="#fff" stroke="none" />
            <path d="M2 1v3M5 1v3" />
          </svg>
        </TrayItem>
        <Clock>
          <ClockLine>
            <Fit w={58} size={15.5}>
              11:45 PM
            </Fit>
          </ClockLine>
          <ClockLine>
            <Fit w={62} size={15.5}>
              2/9/2024
            </Fit>
          </ClockLine>
        </Clock>
      </Tray>
    </Taskbar>
  );
}

export default function App() {
  return (
    <>
      <GlobalStyle />
      <Screen>
        <Browser />
        <AdminPage />
        <TaskbarRow />
      </Screen>
    </>
  );
}
